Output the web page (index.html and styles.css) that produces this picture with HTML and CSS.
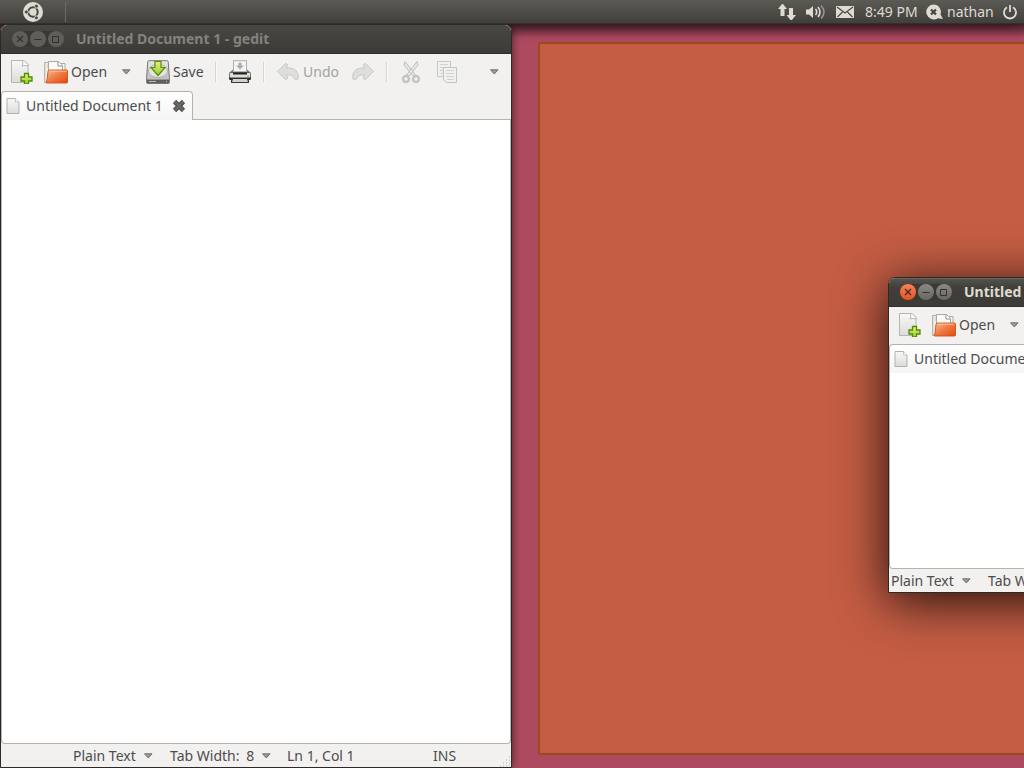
FILE: index.html
```html
<!DOCTYPE html>
<html lang="en">
<head>
<meta charset="utf-8">
<title>Desktop</title>
<link rel="stylesheet" href="styles.css">
</head>
<body>
<svg class="defs" aria-hidden="true">
  <defs>
    <linearGradient id="paper" x1="0" y1="0" x2="0" y2="1"><stop offset="0" stop-color="#f8f8f7"/><stop offset="1" stop-color="#dcdcda"/></linearGradient>
    <linearGradient id="folder" x1="0" y1="0" x2="1" y2="1"><stop offset="0" stop-color="#f5c09a"/><stop offset=".5" stop-color="#ee7840"/><stop offset="1" stop-color="#e2480f"/></linearGradient>
    <linearGradient id="green" x1="0" y1="0" x2="0" y2="1"><stop offset="0" stop-color="#e4f27a"/><stop offset="1" stop-color="#9ccb2a"/></linearGradient>
    <linearGradient id="metal" x1="0" y1="0" x2="0" y2="1"><stop offset="0" stop-color="#e8e8e6"/><stop offset="1" stop-color="#b4b4b1"/></linearGradient>
    <linearGradient id="dark" x1="0" y1="0" x2="0" y2="1"><stop offset="0" stop-color="#6a6a68"/><stop offset="1" stop-color="#222"/></linearGradient>
  </defs>
  <symbol id="i-new" viewBox="0 0 24 24">
    <path d="M2.500 .5h12.500l4 4v18H2.500z" fill="url(#paper)" stroke="#b5b5b1"/>
    <path d="M13.500 .5q1 4-.5 5.500 3-1 6 0v-1.500l-4-4z" fill="#fff" stroke="#b5b5b1"/>
    <path d="M15.500 13.500h4v3.500h3.500v4h-3.500v3h-4v-3h-3.500v-4h3.500z" fill="url(#green)" stroke="#4f8a08" stroke-width="1.300"/>
  </symbol>
  <symbol id="i-open" viewBox="0 0 24 24">
    <path d="M.7 2.500h7v20h-7z" fill="#eee" stroke="#aaa9a5"/>
    <path d="M2.500 5h3M2.500 7h3" stroke="#edbd91"/>
    <path d="M12 3.500h9v9h-9z" fill="#f4f4f3" stroke="#aaa9a5"/>
    <path d="M4.500 1.500h10l4 4v9h-14z" fill="#fafaf9" stroke="#aaa9a5"/>
    <path d="M14 1.500v4.500h4.500" fill="#fff" stroke="#8f8f8b"/>
    <path d="M4 11.500q0-1.500 1.500-1.500h17q1 0 1 1v11q0 1-1 1H2.500q-1-1 .5-3z" fill="url(#folder)" stroke="#d2520f" stroke-width=".9"/>
    <path d="M5.500 11.200h17" stroke="#ffd1ab" stroke-opacity=".75"/>
  </symbol>
  <symbol id="i-save" viewBox="0 0 24 24">
    <path d="M3 .7h18q1 0 1.200 1l1.200 16v4.800q0 1-1 1H1.600q-1 0-1-1v-4.800l1.200-16q.2-1 1.200-1z" fill="url(#metal)" stroke="#777"/>
    <path d="M1 19.500h22v3.500H1z" fill="#5f5f5d"/>
    <path d="M1.500 19.500h21" stroke="#969693"/>
    <path d="M3 21.500h7M20 21.500h1" stroke="#bbb"/>
    <ellipse cx="12" cy="11" rx="9.500" ry="6.500" fill="#e4e4e2" stroke="#a4a4a1" stroke-width=".8"/>
    <path d="M9 1.500h6v6h4L12 15.500 5 7.500h4z" fill="url(#green)" stroke="#578d09" stroke-width="1.200"/>
  </symbol>
  <symbol id="i-print" viewBox="0 0 24 24">
    <path d="M5.500 .7h13v11h-13z" fill="#f6f6f5" stroke="#aaa"/>
    <path d="M10.500 2.500h3v3h2.500L12 9.500 8 5.500h2.500z" fill="#adadab"/>
    <path d="M5 9.500l-3.500 3h21l-3.500-3v3H5z" fill="#777"/>
    <path d="M2.500 12h19q1.500 0 1.500 1.500v5q0 1.500-1.500 1.500h-19Q1 20 1 18.500v-5Q1 12 2.500 12z" fill="url(#dark)"/>
    <path d="M1.700 13h20.600v4.500H1.700z" fill="#deded9"/>
    <path d="M5 12.500h14v2H5z" fill="#232323"/>
    <path d="M19 16.300h2" stroke="#8db327"/>
    <path d="M3 20h18v3H3z" fill="#393939"/>
    <path d="M5 19h14l1 3H4z" fill="#cfcfcb"/>
  </symbol>
  <symbol id="i-undo" viewBox="0 0 24 24">
    <path d="M1.500 11.500l7.500-7.500q1.500-1 2.500 .5.500 1-1.300 3.500h4q7.800 1 8.300 9.500 0 2-2.500 2-1.700 0-2.500-2.300-1-2.200-3.500-2.200h-3.800q1.800 2.500 1.300 3.500-1 1.500-2.500 .5z" fill="#dededb" stroke="#c8c8c4" stroke-linejoin="round"/>
  </symbol>
  <symbol id="i-cut" viewBox="0 0 24 24">
    <path d="M6 1.500l10.500 13.500-2.500 1L5 5zM18 1.500l-10.500 13.500 2.500 1L19 5z" fill="#e8e8e6" stroke="#bfbfbc"/>
    <circle cx="7" cy="19" r="3" fill="none" stroke="#c4c4c1" stroke-width="2.500"/>
    <circle cx="17" cy="19" r="3" fill="none" stroke="#c4c4c1" stroke-width="2.500"/>
  </symbol>
  <symbol id="i-copy" viewBox="0 0 24 24">
    <path d="M2.500 1.500h13v15h-13z" fill="#f0f0ee" stroke="#c7c7c4"/>
    <path d="M5 4.500h8M5 7.500h8M5 10.500h8M5 13.500h8" stroke="#d2d2cf"/>
    <path d="M8.500 7.500h13v15h-10l-3-2.500z" fill="#f0f0ee" stroke="#c4c4c1"/>
    <path d="M11 10.500h8M11 13.500h8M11 16.500h8M12 19.500h7" stroke="#d2d2cf"/>
  </symbol>
  <symbol id="i-doc" viewBox="0 0 14 16">
    <path d="M1 .5h8.500l3.500 3.500v11.500H1z" fill="url(#paper)" stroke="#b1b1ae"/>
    <path d="M9.500 .5v3.500H13" fill="#fff" stroke="#c5c5c2"/>
  </symbol>
  <symbol id="i-x" viewBox="0 0 14 14">
    <path d="M2.500 2.500l9 9M11.500 2.500l-9 9" stroke="#4f4f4d" stroke-width="4.600"/>
    <path d="M2.800 2.800l8.400 8.400M11.200 2.800l-8.400 8.400" stroke="#6b6b69" stroke-width="2"/>
  </symbol>
  <symbol id="i-arrow" viewBox="0 0 10 6">
    <path d="M1.500 .8h7.500L5.300 5z" fill="#9a9a97" stroke="#71716e" stroke-linejoin="round"/>
  </symbol>
  <symbol id="i-close" viewBox="0 0 16 16"><path d="M5 5l6 6M11 5l-6 6" stroke="#32312c" stroke-width="1.200"/></symbol>
  <symbol id="i-min" viewBox="0 0 16 16"><path d="M4.500 8.500h7" stroke="#32312c"/></symbol>
  <symbol id="i-max" viewBox="0 0 16 16"><path d="M4.500 5.500h6v6h-6z" fill="none" stroke="#32312c"/></symbol>
</svg>

<header class="panel">
  <button class="launcher" aria-label="Applications">
    <svg width="20" height="20" viewBox="0 0 20 20"><circle cx="10" cy="10" r="10" fill="#dfdbd2"/><circle cx="10" cy="10" r="4.700" fill="none" stroke="#45443f" stroke-width="2"/><path d="M10 10H2M10 10l4.500-8M10 10l4.500 8" stroke="#dfdbd2" stroke-width="1"/><g fill="#45443f" stroke="#dfdbd2" stroke-width=".8"><circle cx="3.400" cy="10" r="1.900"/><circle cx="13.400" cy="4.200" r="1.900"/><circle cx="13.400" cy="15.800" r="1.900"/></g></svg>
  </button>
  <div class="indicators">
    <svg width="18" height="18" viewBox="0 0 18 18" fill="#dfdbd2"><path d="M4 1h1l4 5H6.500v7h-4V6H0L4 1z"/><path d="M11 5h4v7h3l-4 5h-1.500l-4-5H11z"/></svg>
    <svg width="20" height="18" viewBox="0 0 20 18" fill="none" stroke="#dfdbd2" stroke-width="1.600"><path d="M0 6.500h3L7 3v12l-4-3.500H0z" fill="#dfdbd2" stroke="none"/><path d="M9.500 6q2.500 3 0 6M12 4q4 5 0 10"/><path d="M15 2.500q6 6.500 0 13" stroke="#96938c"/></svg>
    <svg width="18" height="18" viewBox="0 0 18 18"><path d="M0 3h18v12H0z" fill="#dfdbd2"/><path d="M1 4l8 6 8-6M1.500 14l5-5M16.500 14l-5-5" fill="none" stroke="#4b4a46" stroke-width="1.200"/></svg>
    <span>8:49 PM</span>
    <svg width="18" height="18" viewBox="0 0 18 18"><path d="M7.500 1.500a7.500 7.500 0 0 1 7 10l2.500 4.500-5-.8A7.500 7.500 0 1 1 7.500 1.500z" fill="#dfdbd2"/><path d="M5 6.500l5 5M10 6.500l-5 5" stroke="#45443f" stroke-width="2.200"/></svg>
    <span>nathan</span>
    <svg width="14" height="18" viewBox="0 0 14 18" fill="none" stroke="#dfdbd2" stroke-width="1.800"><path d="M4 4.300a6 6 0 1 0 6 0M7 2v7"/></svg>
  </div>
</header>

<main class="desktop">
  <div class="snap-preview"></div>

  <section class="window docked inactive">
    <header class="titlebar">
      <div class="controls">
        <button class="close" aria-label="Close"><svg><use href="#i-close"/></svg></button>
        <button aria-label="Minimize"><svg><use href="#i-min"/></svg></button>
        <button aria-label="Maximize"><svg><use href="#i-max"/></svg></button>
      </div>
      <h1>Untitled Document 1 - gedit</h1>
    </header>
    <nav class="toolbar">
      <button aria-label="New"><svg><use href="#i-new"/></svg></button>
      <button><svg><use href="#i-open"/></svg>Open</button>
      <button aria-label="Recent files"><svg class="arrow"><use href="#i-arrow"/></svg></button>
      <button><svg><use href="#i-save"/></svg>Save</button>
      <i class="sep"></i>
      <button aria-label="Print"><svg><use href="#i-print"/></svg></button>
      <i class="sep"></i>
      <button disabled><svg><use href="#i-undo"/></svg>Undo</button>
      <button disabled aria-label="Redo"><svg class="flip"><use href="#i-undo"/></svg></button>
      <i class="sep"></i>
      <button disabled aria-label="Cut"><svg><use href="#i-cut"/></svg></button>
      <button disabled aria-label="Copy"><svg><use href="#i-copy"/></svg></button>
      <button class="more" aria-label="More"><svg class="arrow"><use href="#i-arrow"/></svg></button>
    </nav>
    <div class="tabs">
      <div class="tab"><svg class="doc"><use href="#i-doc"/></svg><span>Untitled Document 1</span><button aria-label="Close tab"><svg class="x"><use href="#i-x"/></svg></button></div>
      <div class="tab-rest"></div>
    </div>
    <textarea aria-label="Document text"></textarea>
    <footer class="status indented">
      <button>Plain Text<svg class="arrow"><use href="#i-arrow"/></svg></button>
      <button class="wide">Tab Width:<span>8</span><svg class="arrow"><use href="#i-arrow"/></svg></button>
      <span>Ln 1, Col 1</span>
      <span>INS</span>
      <svg class="grip" viewBox="0 0 12 12"><path d="M1 11h11M4 8h8M7 5h5M10 2h2" stroke="#b9b7b3" stroke-width="1" stroke-dasharray="1 2"/></svg>
    </footer>
  </section>

  <section class="window floating">
    <header class="titlebar">
      <div class="controls">
        <button class="close" aria-label="Close"><svg><use href="#i-close"/></svg></button>
        <button aria-label="Minimize"><svg><use href="#i-min"/></svg></button>
        <button aria-label="Maximize"><svg><use href="#i-max"/></svg></button>
      </div>
      <h1>Untitled</h1>
    </header>
    <nav class="toolbar">
      <button aria-label="New"><svg><use href="#i-new"/></svg></button>
      <button><svg><use href="#i-open"/></svg>Open</button>
      <button aria-label="Recent files"><svg class="arrow"><use href="#i-arrow"/></svg></button>
    </nav>
    <div class="tabs">
      <div class="tab"><svg class="doc"><use href="#i-doc"/></svg><span>Untitled Document 1</span></div>
    </div>
    <textarea aria-label="Document text"></textarea>
    <footer class="status">
      <button>Plain Text<svg class="arrow"><use href="#i-arrow"/></svg></button>
      <button class="wide">Tab Width:<span>8</span></button>
    </footer>
  </section>
</main>
</body>
</html>
```
FILE: styles.css
```css
* { box-sizing: border-box; }

body {
  margin: 0;
  height: 100vh;
  display: flex;
  flex-direction: column;
  overflow: hidden;
  background: #ad4a5f;
  color: #4c4c4c;
  font: 14px/20px "Noto Sans", "Open Sans", sans-serif;
}

button {
  display: flex;
  align-items: center;
  padding: 0;
  border: 0;
  background: none;
  color: inherit;
  font: inherit;
  white-space: nowrap;
}

svg { flex: none; display: block; }
.defs { position: absolute; width: 0; height: 0; }

.panel {
  display: flex;
  align-items: center;
  justify-content: space-between;
  flex: none;
  height: 24px;
  padding: 0 7px 0 0;
  background: linear-gradient(#5b5a55, #403f3b);
  border-bottom: 1px solid #31302c;
  box-shadow: 0 0 16px rgba(0, 0, 0, .9);
  color: #dfdbd2;
}

.launcher {
  width: 66px;
  height: 20px;
  padding-left: 23px;
  border-right: 1px solid #6b6a65;
}

.indicators {
  display: grid;
  grid-template-columns: 28px 30px 29px 61px 21px 56px 14px;
  align-items: center;
}

.desktop {
  position: relative;
  flex: 1;
  overflow: clip;
  overflow-clip-margin: 0;
}

.desktop::before {
  content: "";
  position: absolute;
  inset: 0 0 auto;
  height: 14px;
  background: linear-gradient(rgba(40, 20, 25, .65), transparent);
}

.snap-preview {
  position: absolute;
  inset: 18px -14px 13px 538px;
  border: 2px solid #9c4a1c;
  border-radius: 2px;
  background: #c45d44;
}

.window {
  position: absolute;
  display: flex;
  flex-direction: column;
  border: 1px solid #2b2a27;
  border-radius: 7px 7px 0 0;
  background: #f2f1f0;
  overflow: hidden;
}

.docked {
  inset: 0 50% 0 0;
  box-shadow: 0 0 9px rgba(0, 0, 0, .6);
}

.floating {
  left: 888px;
  top: 253px;
  width: 512px;
  height: 316px;
  box-shadow: 0 8px 50px rgba(0, 0, 0, .85);
}

.titlebar {
  display: flex;
  align-items: center;
  gap: 12px;
  flex: none;
  height: 29px;
  padding-left: 11px;
  background: linear-gradient(#55544f, #403f3a 35%, #3c3b37);
  border-bottom: 1px solid #302f2c;
  box-shadow: inset 0 1px #66655f;
}

h1 {
  margin: 0;
  color: #dfdbd2;
  font-size: 14px;
  line-height: 20px;
  font-weight: 700;
  white-space: nowrap;
}

.controls {
  display: flex;
  gap: 2px;
  border-radius: 9px;
  background: #393833;
}

.controls button {
  width: 16px;
  height: 16px;
  border-radius: 50%;
  background: linear-gradient(#8b8983, #686660);
}

.controls .close { background: linear-gradient(#fa8159, #e65320); }
.controls svg { width: 16px; height: 16px; }
.inactive .titlebar { background: linear-gradient(#484743, #3c3b37); box-shadow: none; }
.inactive h1 { color: #85827c; }
.inactive .controls button { background: #5f5e58; }

.toolbar {
  display: grid;
  grid-template-columns: 35px 77px 25px 69px 13px 35px 13px 75px 35px 13px 36px 24px 1fr;
  align-items: center;
  flex: none;
  height: 37px;
  padding: 0 12px 2px 8px;
}

.toolbar button { gap: 3px; }
.toolbar button:disabled { color: #a3a39f; }
.toolbar svg { width: 24px; height: 24px; }
.toolbar .flip { transform: scaleX(-1); }
.toolbar .more { justify-self: end; }
.toolbar .arrow, .arrow { width: 10px; height: 6px; }

.sep {
  width: 2px;
  height: 20px;
  background: #fafafa;
  border-left: 1px solid #d8d6d3;
}

.tabs {
  display: flex;
  flex: none;
  height: 29px;
}

.tab {
  display: flex;
  align-items: center;
  width: 192px;
  padding: 0 6px 0 4px;
  gap: 6px;
  border: 1px solid #b6b2ad;
  border-bottom: 0;
  border-radius: 4px 4px 0 0;
  background: linear-gradient(#fff, #f5f5f4);
  white-space: nowrap;
}

.tab button { margin-left: auto; }
.floating .tab { width: 100%; }
.doc { width: 14px; height: 16px; }
.x { width: 14px; height: 14px; }
.tab-rest { flex: 1; border-bottom: 1px solid #b6b2ad; }

textarea {
  flex: 1;
  width: 100%;
  margin: 0;
  padding: 4px;
  border: 1px solid #b6b2ad;
  border-top: 0;
  border-radius: 0 0 4px 4px;
  background: #fff;
  font: inherit;
  resize: none;
  outline: 0;
}

.status {
  position: relative;
  display: grid;
  grid-template-columns: 97px 117px 146px 1fr;
  align-items: center;
  flex: none;
  height: 23px;
  padding-left: 2px;
  white-space: nowrap;
}

.indented { padding-left: 72px; }
.status button { width: 80px; justify-content: space-between; }
.status .wide { width: 101px; }

.grip {
  position: absolute;
  right: 0;
  bottom: 0;
  width: 12px;
  height: 12px;
}
```
